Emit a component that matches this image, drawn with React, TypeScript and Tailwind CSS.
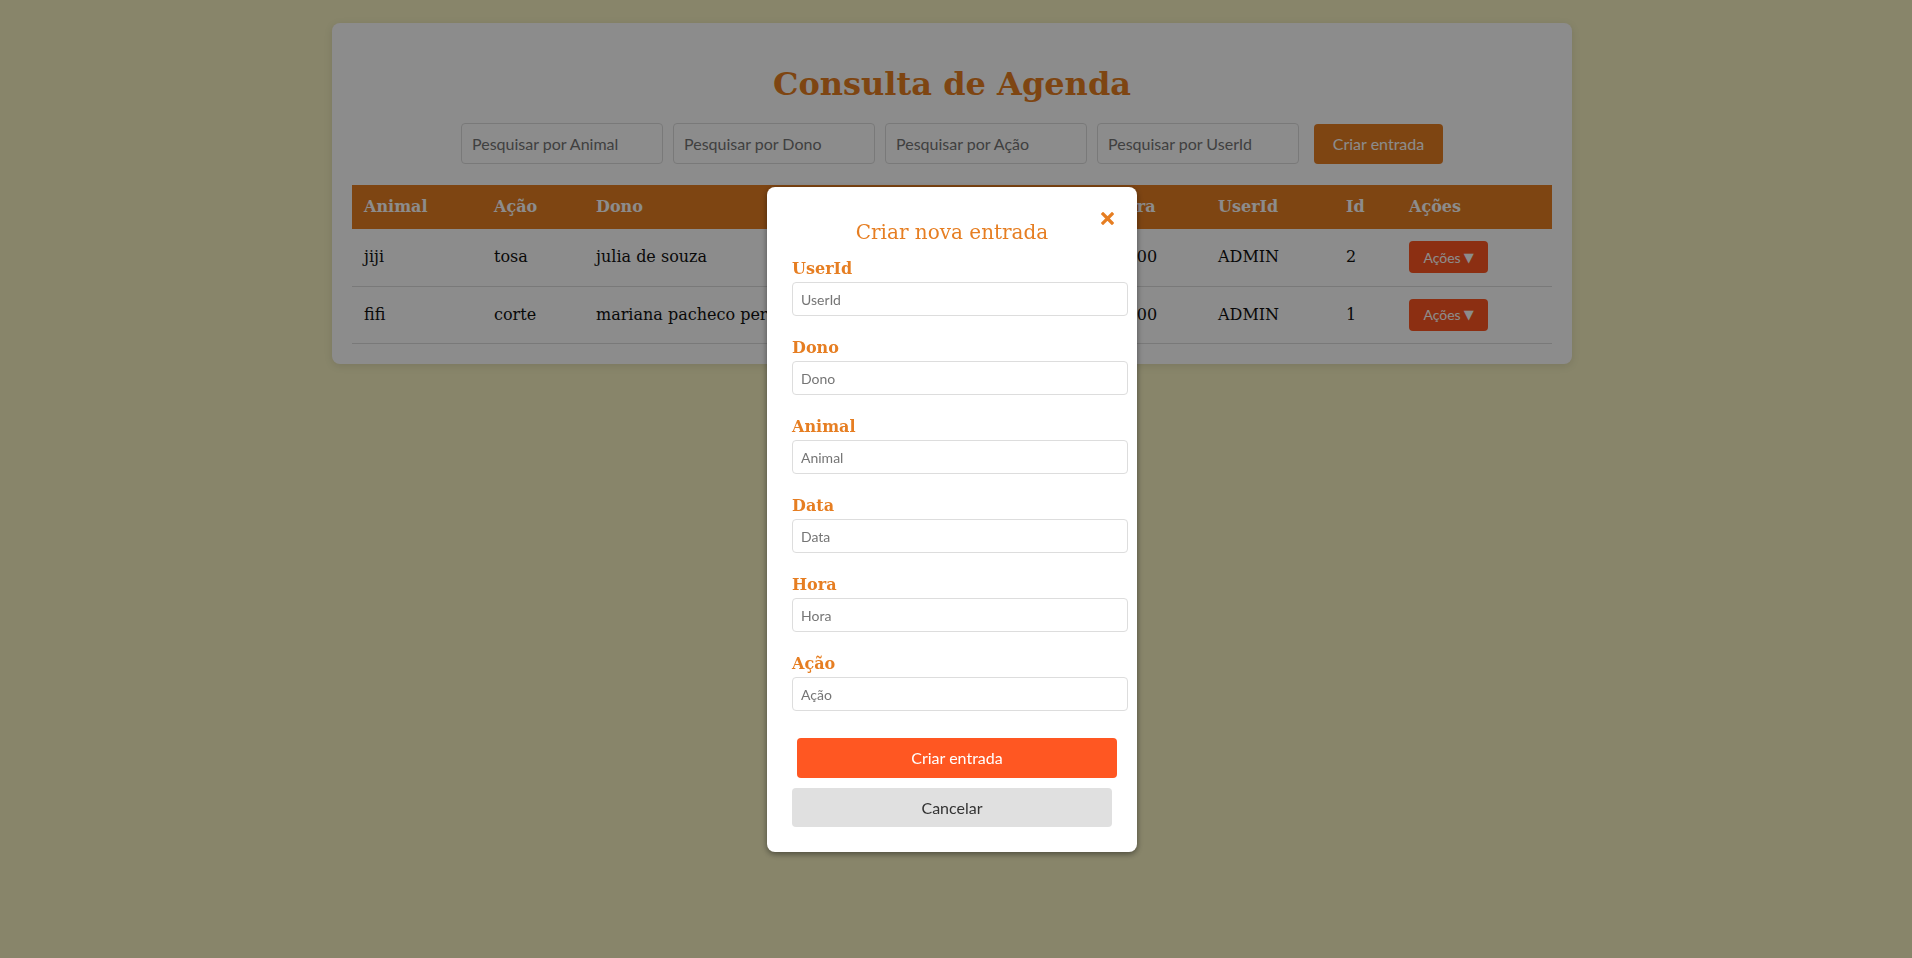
import React from 'react';

const serif = "font-['DejaVu_Serif',serif]";
const sans = "font-['Lato',sans-serif]";

const rows = [
  { animal: 'jiji', acao: 'tosa', dono: 'julia de souza', data: '2024-06-12', hora: '10:00', userId: 'ADMIN', id: '2' },
  { animal: 'fifi', acao: 'corte', dono: 'mariana pacheco pereira', data: '2024-06-10', hora: '14:00', userId: 'ADMIN', id: '1' },
];

const fields = ['UserId', 'Dono', 'Animal', 'Data', 'Hora', 'Ação'];

const App = () => {
  return (
    <div className="relative min-h-screen bg-[#f7f2c1] pt-[23px] pr-[8px]">
      {/* Agenda card */}
      <section className="mx-auto w-[1240px] rounded-[8px] bg-white px-[20px] pt-[43px] pb-[20px] shadow-[0_2px_8px_rgba(0,0,0,0.1)]">
        <h1 className={`${serif} text-center text-[32px] font-bold leading-[37px] text-[#e67e22]`}>
          Consulta de Agenda
        </h1>

        <div className="mt-[20px] flex items-center justify-center">
          <div className="flex gap-[10px]">
            {['Pesquisar por Animal', 'Pesquisar por Dono', 'Pesquisar por Ação', 'Pesquisar por UserId'].map((p) => (
              <input
                key={p}
                placeholder={p}
                className={`${sans} h-[41px] w-[202px] rounded-[4px] border border-[#ddd] px-[10px] text-[16px] text-[#333] placeholder:text-[#757575]`}
              />
            ))}
          </div>
          <button className={`${sans} ml-[15px] h-[40px] w-[129px] rounded-[4px] bg-[#e67e22] text-[16px] text-white`}>
            Criar entrada
          </button>
        </div>

        <table className={`${serif} mt-[21px] w-[1200px] table-fixed border-collapse text-left text-[16px]`}>
          <colgroup>
            <col className="w-[130px]" />
            <col className="w-[102px]" />
            <col className="w-[300px]" />
            <col className="w-[215px]" />
            <col className="w-[107px]" />
            <col className="w-[128px]" />
            <col className="w-[63px]" />
            <col className="w-[155px]" />
          </colgroup>
          <thead>
            <tr className="h-[44px] bg-[#e67e22] text-white">
              {['Animal', 'Ação', 'Dono', 'Data', 'Hora', 'UserId', 'Id', 'Ações'].map((h) => (
                <th key={h} className="px-[12px] font-bold">
                  {h}
                </th>
              ))}
            </tr>
          </thead>
          <tbody>
            {rows.map((r) => (
              <tr key={r.id} className="h-[57px] border-b border-[#ddd] text-[#111]">
                <td className="px-[12px]">{r.animal}</td>
                <td className="px-[12px]">{r.acao}</td>
                <td className="px-[12px] whitespace-nowrap">{r.dono}</td>
                <td className="px-[12px]">{r.data}</td>
                <td className="px-[12px]">{r.hora}</td>
                <td className="px-[12px]">{r.userId}</td>
                <td className="px-[12px]">{r.id}</td>
                <td className="px-[12px]">
                  <button className={`${sans} flex h-[32px] w-[79px] items-center justify-center gap-[3px] rounded-[4px] bg-[#ff5722] text-[14px] text-white`}>
                    <span>Ações</span>
                    <span className="font-['DejaVu_Sans',sans-serif] text-[13px]">▼</span>
                  </button>
                </td>
              </tr>
            ))}
          </tbody>
        </table>
      </section>

      {/* Overlay + modal */}
      <div className="fixed inset-0 flex justify-center bg-black/45 pt-[187px] pr-[8px]">
        <div className="relative h-fit w-[370px] rounded-[8px] bg-white px-[25px] pt-[33px] pb-[25px] shadow-[0_2px_6px_rgba(0,0,0,0.45)]">
          <button className="absolute right-[23px] top-[24px] flex h-[14px] w-[14px] items-center justify-center">
            <svg width="13" height="13" viewBox="0 0 13 13">
              <path d="M2 2 L11 11 M11 2 L2 11" stroke="#e67e22" strokeWidth="3.2" strokeLinecap="square" />
            </svg>
          </button>

          <h2 className={`${serif} text-center text-[20px] leading-[24px] text-[#e67e22]`}>Criar nova entrada</h2>

          <div className="mt-[15px] flex flex-col gap-[22px]">
            {fields.map((f) => (
              <div key={f} className="flex flex-col">
                <label className={`${serif} mb-[4px] text-[16px] font-bold leading-[19px] text-[#e67e22]`}>{f}</label>
                <input
                  placeholder={f}
                  className={`${sans} h-[34px] w-[336px] rounded-[4px] border border-[#ddd] px-[8px] text-[14px] text-[#333] placeholder:text-[#757575]`}
                />
              </div>
            ))}
          </div>

          <button className={`${sans} ml-[5px] mt-[27px] h-[40px] w-[320px] rounded-[4px] bg-[#ff5722] text-[16px] text-white`}>
            Criar entrada
          </button>
          <button className={`${sans} mt-[10px] block h-[39px] w-[320px] rounded-[4px] bg-[#e0e0e0] text-[16px] text-[#333]`}>
            Cancelar
          </button>
        </div>
      </div>
    </div>
  );
};

export default App;
